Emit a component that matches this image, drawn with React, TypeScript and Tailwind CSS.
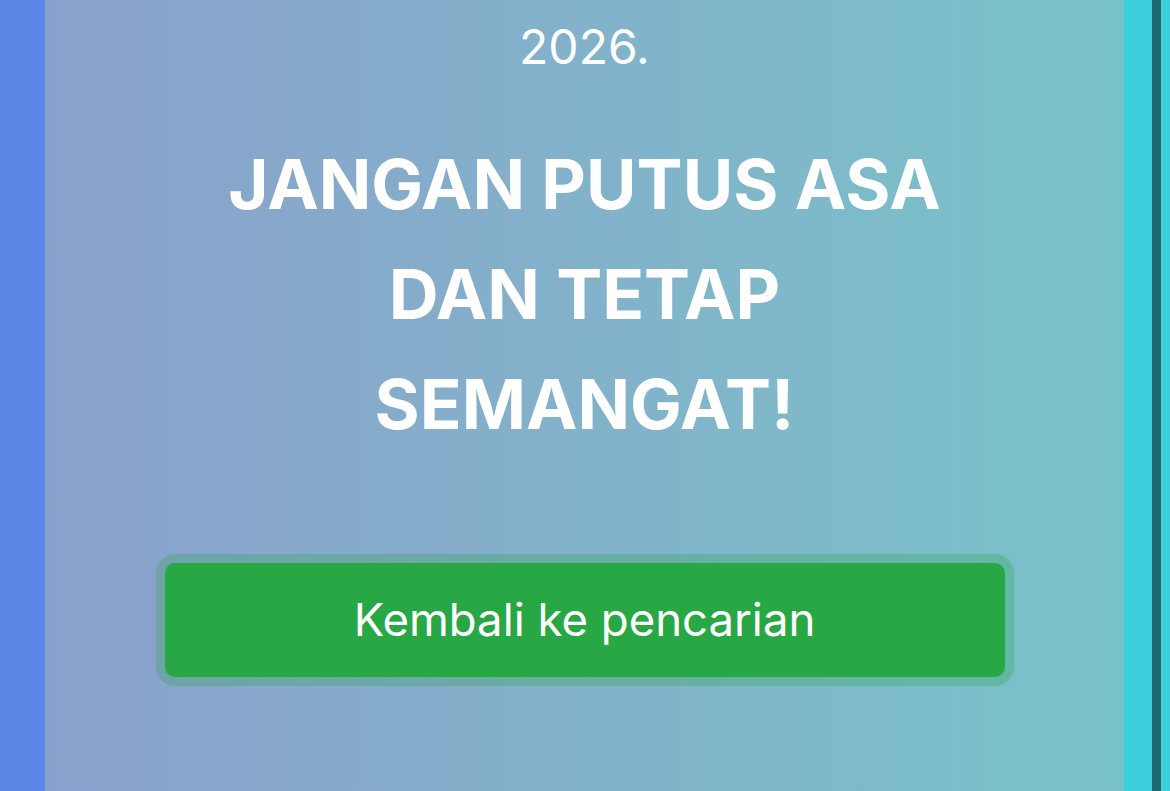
import React from "react";

export default function App() {
  return (
    <div className="flex h-[791px] w-[1170px] overflow-hidden bg-[#3ccfdc]" style={{ fontFamily: "Inter, 'Noto Sans', sans-serif" }}>
      <div className="w-[45px] shrink-0 bg-[#5d87e6]" />
      <div className="flex w-[1079px] shrink-0 flex-col items-center bg-gradient-to-r from-[#8aa0cc] to-[#78c3c8] px-[120px] text-center text-white">
        <p className="mt-[11px] text-[48px] leading-[72px]">2026.</p>
        <h1 className="mt-[46px] max-w-[760px] text-[69px] font-bold leading-[110px]">JANGAN PUTUS ASA DAN TETAP SEMANGAT!</h1>
        <button className="mt-[104px] h-[114px] w-[840px] rounded-[10px] bg-[#28a745] text-[45.5px] text-white shadow-[0_0_0_9px_rgba(40,167,69,0.28)]">
          Kembali ke pencarian
        </button>
      </div>
      <div className="w-[28px] shrink-0 bg-[#3ccfdc]" />
      <div className="w-[9px] shrink-0 bg-[#1e6a70]" />
      <div className="flex-1 bg-[#3ccfdc]" />
    </div>
  );
}
